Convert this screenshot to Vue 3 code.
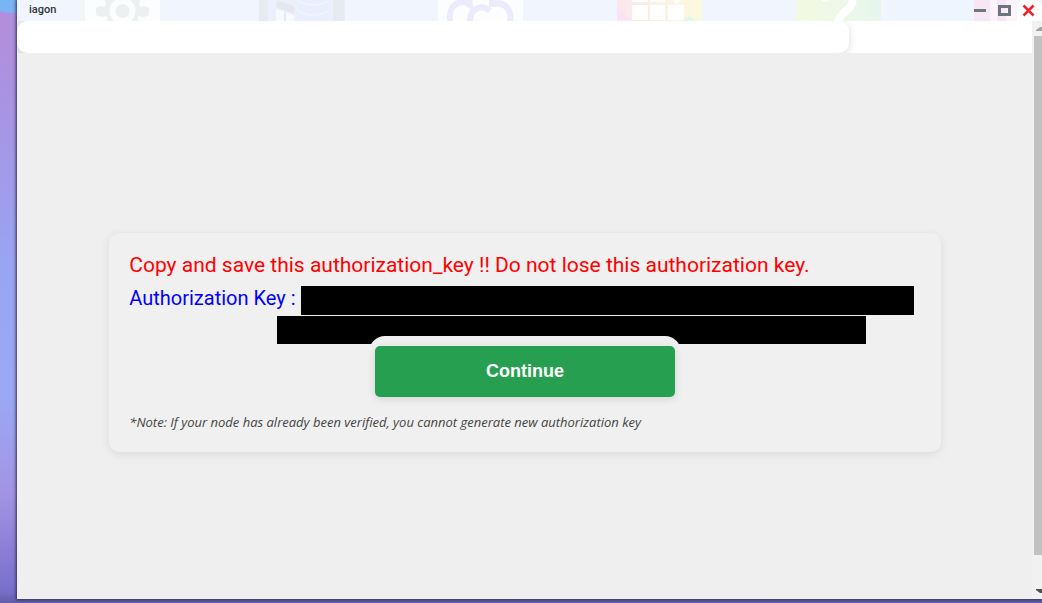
<script setup>
const title = 'iagon'
</script>

<template>
  <div class="desktop">
    <section class="window">
      <header class="titlebar">
        <svg class="backdrop" width="1025" height="21" viewBox="17 0 1025 21" aria-hidden="true">
          <defs>
            <linearGradient id="glass" x1="0" x2="1">
              <stop offset="0" stop-color="#f1f6fe" />
              <stop offset="0.8" stop-color="#f1f5fe" />
              <stop offset="1" stop-color="#ebf5ff" />
            </linearGradient>
            <linearGradient id="rainbow" x1="0" x2="1">
              <stop offset="0" stop-color="#fbe7ef" />
              <stop offset="0.5" stop-color="#fdf0e5" />
              <stop offset="1" stop-color="#fafbdc" />
            </linearGradient>
            <linearGradient id="leaf" x1="0" x2="1">
              <stop offset="0" stop-color="#f4fae2" />
              <stop offset="1" stop-color="#e6f6ee" />
            </linearGradient>
          </defs>
          <rect x="17" width="1025" height="21" fill="url(#glass)" />
          <rect x="80" width="85" height="21" fill="#f3f6f8" />
          <rect x="85" width="75" height="21" fill="#fbfdfe" />
          <path d="M96 8l5-2 3 1 2-3-1-4h35l-1 4 2 3 3-1 5 2v7l-5 2-5-1-2 2 1 3h-31l1-3-2-2-5 1-5-2z" fill="#ecf0f1" />
          <circle cx="122.500" cy="11" r="10" fill="none" stroke="#fbfdfe" stroke-width="6" />
          <rect x="259" width="86" height="21" fill="#eaedf5" />
          <rect x="259" width="9" height="21" fill="#e7eaef" />
          <rect x="333" width="11" height="21" fill="#e7eaef" />
          <rect x="268" width="65" height="21" fill="#ebf0fc" />
          <path d="M277 0l17 6v8l-18-7z" fill="#e5e7ee" />
          <path d="M276 9l18 6v6h-18z" fill="#f8faff" />
          <path d="M285 12v9" stroke="#e5eafa" stroke-width="2" />
          <path d="M298 0h30v21h-30z" fill="#e9effd" />
          <path d="M298 1q15 8 30 0M298 11q15 8 30 0" fill="none" stroke="#f0f4ff" stroke-width="2" />
          <rect x="438" width="85" height="21" fill="#fbfdff" />
          <g fill="none" stroke="#ecebfd" stroke-width="6">
            <path d="M452 26C447 14 451 3 463 2Q467 2 470 5Q467-8 481-8Q493-7 492 4Q506 1 510 13Q512 21 506 28" />
            <path d="M490 11C481 3 470 9 470 21" />
          </g>
          <rect x="617" width="85" height="21" fill="url(#rainbow)" />
          <path d="M617 6l15 15h-15z" fill="#f9e4f5" />
          <path d="M682 21l7-5 8 5z" fill="#e2f6e9" />
          <path d="M632 0h16v2h-16zM650 0h15v2h-15zM672 0h9l-4 4zM632 5h16v15h-16zM650 5h15v15h-15zM668 5h16v15h-16z" fill="#fff" />
          <rect x="796" width="85" height="21" fill="url(#leaf)" />
          <circle cx="825" cy="-3" r="5" fill="#fff" />
          <path d="M852-3q2 9-6 14-7 5-9 14" fill="none" stroke="#fff" stroke-width="8" />
          <rect x="974" width="16" height="21" fill="#f7e6f4" />
          <rect x="990" width="27" height="21" fill="#fcf3fb" />
          <path d="M997 0h9v21h-9z" fill="#f7e6f4" />
          <path d="M1017 21V8q0-8 8-8h11q6 2 6 8v13z" fill="#fff" />
        </svg>
        <h1 class="title">{{ title }}</h1>
        <div class="controls">
          <button type="button" aria-label="Minimize">
            <svg width="13" height="13" viewBox="0 0 13 13"><path d="M0 5h12v3H0z" fill="#6d767d" /></svg>
          </button>
          <button type="button" aria-label="Maximize">
            <svg width="13" height="13" viewBox="0 0 13 13"><path fill-rule="evenodd" d="M0 1h13v11H0zM3 4v5h7V4z" fill="#6d767d" /></svg>
          </button>
          <button type="button" aria-label="Close">
            <svg width="13" height="13" viewBox="0 0 13 13"><path d="M1.500 1.500l10 10M11.500 1.500l-10 10" fill="none" stroke="#ea2429" stroke-width="2.500" /></svg>
          </button>
        </div>
      </header>

      <div class="body">
        <div class="page">
          <div class="topbar"><div class="panel"></div></div>
          <main class="content">
            <article class="card">
              <p class="warning">Copy and save this authorization_key !! Do not lose this authorization key.</p>
              <div class="key-row">
                <span class="key-label">Authorization Key :</span>
                <span class="mask"></span>
              </div>
              <div class="mask second"></div>
              <div class="action"><button type="button" class="continue">Continue</button></div>
              <p class="note">*Note: If your node has already been verified, you cannot generate new authorization key</p>
            </article>
          </main>
        </div>
        <div class="scrollbar" aria-hidden="true">
          <svg width="8" height="15" viewBox="0 0 8 15"><path d="M2 10h6V6H6L2 9z" fill="#a3a3a3" /></svg>
          <div class="thumb"></div>
          <svg width="8" height="15" viewBox="0 0 8 15"><path d="M2 5h6v4H6L2 6z" fill="#505050" /></svg>
        </div>
      </div>
    </section>
  </div>
</template>

<style>
body { margin: 0; overflow: hidden; }
</style>

<style scoped>
* { box-sizing: border-box; }
.desktop {
  height: 100vh;
  padding: 0 0 4px 17px;
  overflow: hidden;
  background:
    linear-gradient(187deg, #79b4f4 13px, transparent 14px) 0 0 / 17px 30px no-repeat,
    linear-gradient(180deg, #b18fdd 0, #b18fdd 6%, #a894e2 18%, #98a5f3 45%, #9ba8f5 66%, #a294e2 82%, #8a7cd5 92%, #7770ca 98%, #615caa 100%);
}
.window {
  display: flex;
  flex-direction: column;
  height: 100%;
  background: #efefef;
  box-shadow: 0 0 3px 1px #302b59;
}
.titlebar {
  position: relative;
  display: flex;
  flex: none;
  align-items: center;
  justify-content: space-between;
  height: 21px;
  padding: 0 7px 0 12px;
  overflow: hidden;
  background: #f1f6fe;
}
.backdrop { position: absolute; top: 0; left: 0; }
.title {
  position: relative;
  margin: 0;
  padding-bottom: 2px;
  color: #303438;
  font: 500 11px/16px Roboto, sans-serif;
}
.controls { position: relative; display: flex; gap: 11px; }
.controls button {
  display: block;
  width: 13px;
  height: 13px;
  padding: 0;
  border: 0;
  background: transparent;
}
.controls svg { display: block; }
.body { display: flex; flex: 1; min-height: 0; }
.page { flex: 1; min-width: 0; overflow: hidden; }
.topbar { height: 32px; overflow: hidden; background: linear-gradient(90deg, #efefef 50%, #fff 50%); }
.panel {
  width: 82%;
  height: 32px;
  border-radius: 10px;
  background: #fff;
  box-shadow: 0 2px 8px rgb(0 0 0 / 14%);
}
.content { padding: 180px 0 0 1px; }
.card {
  width: 82%;
  margin: 0 auto;
  padding: 16px 20px 20px;
  border-radius: 10px;
  background: #f0f0f0;
  box-shadow: 0 2px 10px rgb(0 0 0 / 9%);
  font-family: Roboto, "Noto Sans", sans-serif;
}
.warning, .key-label { line-height: 32px; white-space: nowrap; }
.warning { margin: 0; color: #f00; font-size: 21px; }
.key-row { display: flex; align-items: flex-start; height: 34px; padding-top: 1px; }
.key-label { flex: 0 0 172px; color: #00f; font-size: 20px; }
.mask { display: block; background: #000; }
.key-row .mask { flex: 1; height: 29px; margin: 4px 7px 0 0; }
.second { height: 28px; margin: 1px 55px 0 148px; }
.action {
  width: 312px;
  margin: -8px auto 0;
  padding: 10px 6px 0;
  border-radius: 16px 16px 0 0;
  background: #f0f0f0;
}
.continue {
  display: block;
  width: 100%;
  height: 51px;
  padding: 0 0 2px;
  border: 0;
  border-radius: 5px;
  background: #26a050;
  box-shadow: 0 2px 8px rgb(0 0 0 / 12%);
  color: #fff;
  font: bold 18px/24px "Liberation Sans", Arial, sans-serif;
}
.note {
  margin: 15px 0 0;
  color: #444;
  font: italic 13px/20px "Open Sans", sans-serif;
  white-space: nowrap;
}
.scrollbar {
  display: flex;
  flex: 0 0 10px;
  flex-direction: column;
  padding-left: 2px;
  background: #f1f1f1;
}
.scrollbar svg { display: block; flex: none; }
.thumb { flex: 1; margin-bottom: 29px; background: #c1c1c1; }
</style>
